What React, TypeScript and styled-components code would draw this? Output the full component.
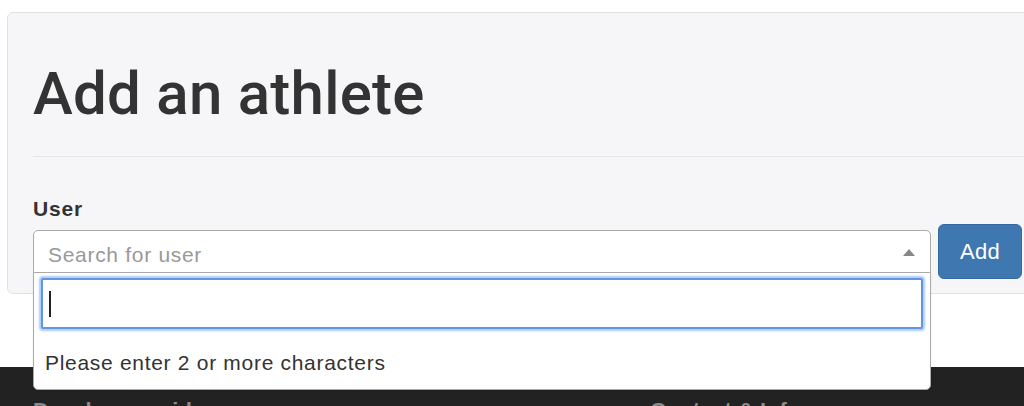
import React from "react";
import styled, { createGlobalStyle } from "styled-components";

const GlobalStyle = createGlobalStyle`
  html, body {
    margin: 0;
    padding: 0;
    background: #ffffff;
    font-family: "Liberation Sans", Arial, Helvetica, sans-serif;
    color: #333333;
    overflow: hidden;
  }
  #root {
    width: 1024px;
    height: 406px;
    overflow: hidden;
  }
`;

const Page = styled.div`
  display: flex;
  flex-direction: column;
  height: 406px;
`;

const Main = styled.main`
  padding: 12px 0 0 7px;
`;

const Panel = styled.section`
  margin-right: -24px;
  background: #f6f6f8;
  border: 1px solid #e2e2e5;
  border-radius: 6px;
  padding: 48px 25px 14px 25px;
`;

const HeaderBlock = styled.div`
  border-bottom: 1px solid #e6e6e8;
  padding-bottom: 29px;
  margin-right: -26px;
`;

const Title = styled.h1`
  margin: 0;
  font-family: Roboto, "Liberation Sans", Arial, sans-serif;
  font-size: 60px;
  line-height: 66px;
  font-weight: 500;
  color: #333333;
  letter-spacing: 0.25px;
`;

const Label = styled.label`
  display: block;
  margin-top: 40px;
  font-size: 21px;
  line-height: 24px;
  font-weight: 700;
  letter-spacing: 0.8px;
  color: #333333;
`;

const FieldRow = styled.div`
  display: flex;
  align-items: center;
  gap: 7px;
  margin-top: 3px;
`;

const SelectWrap = styled.div`
  position: relative;
  flex: 1;
`;

const SelectBox = styled.div`
  height: 43px;
  box-sizing: border-box;
  border: 1px solid #aaaaaa;
  border-radius: 5px 5px 0 0;
  background: #ffffff;
  display: flex;
  align-items: center;
  justify-content: space-between;
  padding: 6px 15px 0 14px;
`;

const Placeholder = styled.span`
  font-size: 21px;
  letter-spacing: 0.7px;
  color: #999999;
`;

const Arrow = styled.span`
  width: 0;
  height: 0;
  border-left: 6px solid transparent;
  border-right: 6px solid transparent;
  border-bottom: 7px solid #888888;
  margin-top: -4px;
`;

const Dropdown = styled.div`
  position: absolute;
  left: 0;
  right: 0;
  top: 42px;
  z-index: 10;
  box-sizing: border-box;
  background: #ffffff;
  border: 1px solid #aaaaaa;
  border-radius: 0 0 5px 5px;
  padding: 5px 7px 14px 7px;
  box-shadow: 0 1px 2px rgba(0, 0, 0, 0.08);
`;

const SearchField = styled.div`
  height: 51px;
  box-sizing: border-box;
  border: 2px solid #5f97e6;
  border-radius: 2px;
  box-shadow: 0 0 2px 2px rgba(110, 160, 240, 0.55);
  background: #ffffff;
  display: flex;
  align-items: center;
  padding-left: 6px;
`;

const Caret = styled.span`
  width: 1.5px;
  height: 26px;
  background: #222222;
`;

const Message = styled.div`
  margin-top: 22px;
  padding-left: 4px;
  font-size: 21px;
  line-height: 24px;
  letter-spacing: 0.7px;
  color: #333333;
`;

const AddButton = styled.button`
  width: 84px;
  height: 55px;
  flex: none;
  box-sizing: border-box;
  background: #3f77b1;
  border: 1px solid #3669a0;
  border-radius: 6px;
  color: #ffffff;
  font-family: "Liberation Sans", Arial, Helvetica, sans-serif;
  font-size: 22px;
  letter-spacing: 0.3px;
  padding: 1px 0 0 0;
`;

const Footer = styled.footer`
  margin-top: 73px;
  flex: 1;
  background: #222222;
  display: grid;
  grid-template-columns: 617px 1fr;
  padding: 31px 0 0 33px;
`;

const FooterHeading = styled.h3`
  margin: 0;
  font-size: 22px;
  line-height: 26px;
  font-weight: 700;
  color: #8a8a8a;
`;

export default function App() {
  return (
    <>
      <GlobalStyle />
      <Page>
        <Main>
          <Panel>
            <HeaderBlock>
              <Title>Add an athlete</Title>
            </HeaderBlock>
            <Label>User</Label>
            <FieldRow>
              <SelectWrap>
                <SelectBox>
                  <Placeholder>Search for user</Placeholder>
                  <Arrow />
                </SelectBox>
                <Dropdown>
                  <SearchField>
                    <Caret />
                  </SearchField>
                  <Message>Please enter 2 or more characters</Message>
                </Dropdown>
              </SelectWrap>
              <AddButton>Add</AddButton>
            </FieldRow>
          </Panel>
        </Main>
        <Footer>
          <FooterHeading>Developer guide</FooterHeading>
          <FooterHeading>Contact &amp; Info</FooterHeading>
        </Footer>
      </Page>
    </>
  );
}
